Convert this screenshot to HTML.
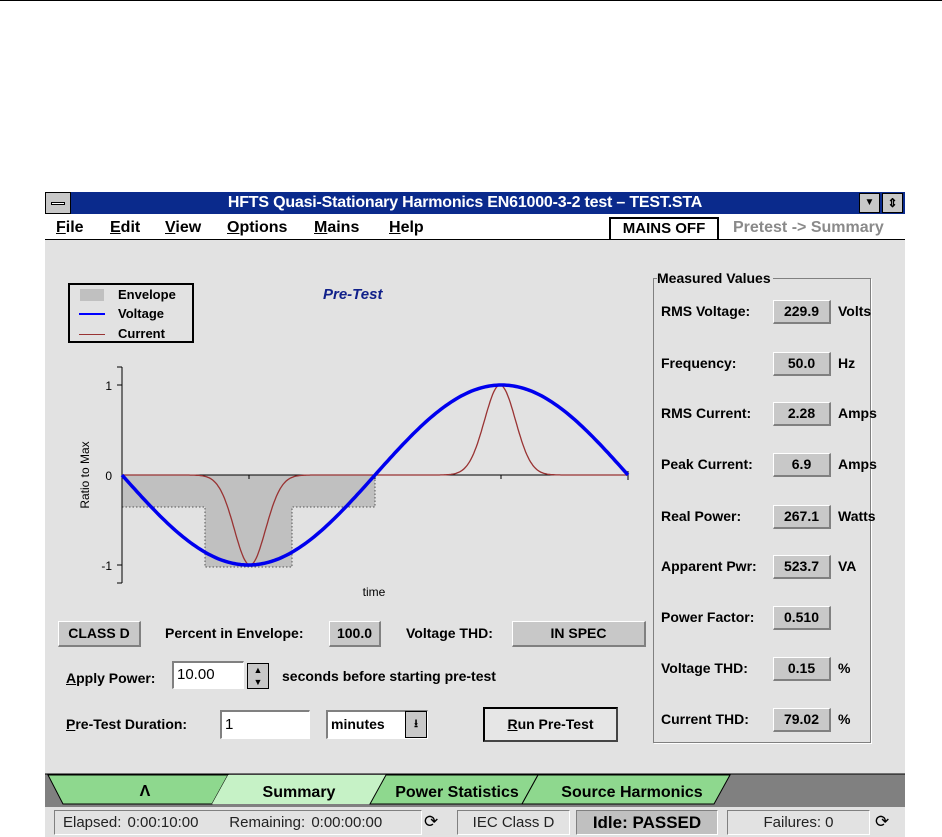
<!DOCTYPE html>
<html><head><meta charset="utf-8"><style>
*{margin:0;padding:0;box-sizing:border-box}
body{width:942px;height:837px;background:#fff;position:relative;overflow:hidden;font-family:"Liberation Sans",Arial,sans-serif;font-weight:bold;font-size:14px;color:#000}
.a{position:absolute;white-space:nowrap}
.box{position:absolute;background:#c8c8c8;border-top:1px solid #fff;border-left:1px solid #fff;border-right:2px solid #808080;border-bottom:2px solid #808080;text-align:center;font-size:14px;line-height:20px}
.in{position:absolute;background:#fff;border-top:2px solid #808080;border-left:2px solid #808080;border-right:1px solid #fff;border-bottom:1px solid #fff;font-weight:normal;font-size:15px;padding-left:3px}
u{text-decoration:underline}
.st{position:absolute;top:810px;height:25px;border-top:1px solid #808080;border-left:1px solid #808080;border-right:1px solid #fff;border-bottom:1px solid #fff;font-weight:normal;font-size:15px;line-height:23px;color:#222}
svg text{font-weight:normal}
</style></head><body>
<div class="a" style="left:0;top:0;width:942px;height:1px;background:#000"></div>
<div class="a" style="left:45px;top:192px;width:860px;height:645px;background:#e2e2e2"></div>
<div class="a" style="left:45px;top:192px;width:860px;height:22px;background:#0a2a8c;color:#fff;font-size:16px;line-height:22px;text-align:center;padding-right:20px;letter-spacing:-0.2px">HFTS Quasi-Stationary Harmonics EN61000-3-2 test – TEST.STA</div>
<div class="a" style="left:45px;top:192px;width:26px;height:22px;background:#c8c8c8;border:1px solid #000"><div style="position:absolute;left:5px;top:9px;width:14px;height:3px;background:#fff;border:1px solid #000"></div></div>
<div class="a" style="left:859px;top:193px;width:21px;height:20px;background:#c8c8c8;border:1px solid #000;font-size:10px;text-align:center;line-height:18px">▼</div>
<div class="a" style="left:882px;top:193px;width:21px;height:20px;background:#c8c8c8;border:1px solid #000;font-size:12px;text-align:center;line-height:18px">⇕</div>
<div class="a" style="left:45px;top:214px;width:860px;height:26px;background:#fff;border-bottom:1px solid #000"></div>
<div class="a" style="left:56px;top:219px;font-size:16px"><u>F</u>ile</div>
<div class="a" style="left:110px;top:219px;font-size:16px"><u>E</u>dit</div>
<div class="a" style="left:165px;top:219px;font-size:16px"><u>V</u>iew</div>
<div class="a" style="left:227px;top:219px;font-size:16px"><u>O</u>ptions</div>
<div class="a" style="left:314px;top:219px;font-size:16px"><u>M</u>ains</div>
<div class="a" style="left:389px;top:219px;font-size:16px"><u>H</u>elp</div>
<div class="a" style="left:609px;top:217px;width:110px;height:22px;border:2px solid #000;border-bottom:none;font-size:15px;text-align:center;line-height:20px">MAINS OFF</div>
<div class="a" style="left:733px;top:219px;font-size:16px;color:#8a8a8a">Pretest -&gt; Summary</div>
<div class="a" style="left:68px;top:283px;width:126px;height:60px;border:2px solid #000"></div>
<div class="a" style="left:80px;top:289px;width:24px;height:12px;background:#c0c0c0"></div>
<div class="a" style="left:79px;top:313px;width:26px;height:2px;background:#0000ff"></div>
<div class="a" style="left:79px;top:334px;width:26px;height:1px;background:#993333"></div>
<div class="a" style="left:118px;top:287px;font-size:13px">Envelope</div>
<div class="a" style="left:118px;top:306px;font-size:13px">Voltage</div>
<div class="a" style="left:118px;top:326px;font-size:13px">Current</div>
<div class="a" style="left:323px;top:286px;font-size:15px;font-style:italic;color:#10208a">Pre-Test</div>
<svg class="a" style="left:0;top:0" width="942" height="837">
<path d="M122 475 H375 V507 H292 V567 H205 V507 H122 Z" fill="#c0c0c0"/>
<path d="M122 507 H205 V567 H292 V507 H375 V475" fill="none" stroke="#555" stroke-dasharray="1.5 2"/>
<line x1="122" y1="367" x2="122" y2="583" stroke="#000"/>
<line x1="117" y1="367" x2="122" y2="367" stroke="#000"/>
<line x1="117" y1="583" x2="122" y2="583" stroke="#000"/>
<line x1="117" y1="385" x2="122" y2="385" stroke="#000"/>
<line x1="117" y1="565" x2="122" y2="565" stroke="#000"/>
<line x1="122" y1="475" x2="628" y2="475" stroke="#000"/>
<line x1="249" y1="475" x2="249" y2="479" stroke="#000"/>
<line x1="375" y1="475" x2="375" y2="479" stroke="#000"/>
<line x1="501" y1="475" x2="501" y2="479" stroke="#000"/>
<line x1="628" y1="471" x2="628" y2="480" stroke="#000"/>
<path id="cur" fill="none" stroke="#993333" stroke-width="1.3" d=""/>
<path id="volt" fill="none" stroke="#0000ee" stroke-width="3.5" d=""/>
<text x="112" y="390" font-size="12" font-family="Liberation Sans" text-anchor="end">1</text>
<text x="112" y="480" font-size="12" font-family="Liberation Sans" text-anchor="end">0</text>
<text x="112" y="570" font-size="12" font-family="Liberation Sans" text-anchor="end">-1</text>
<text x="374" y="596" font-size="12" font-family="Liberation Sans" text-anchor="middle">time</text>
<text transform="translate(89 475) rotate(-90)" font-size="12" font-family="Liberation Sans" text-anchor="middle">Ratio to Max</text>
<rect x="45" y="774" width="860" height="33" fill="#808080"/>
<line x1="45" y1="774" x2="905" y2="774" stroke="#000"/>
<path d="M48 775 L228 775 L212 804 L63 804 Z" fill="#8ed88e" stroke="#000"/>
<path d="M228 775 L386 775 L370 804 L212 804 Z" fill="#c6f2c6" stroke="none"/>
<path d="M386 775 L538 775 L522 804 L370 804 Z" fill="#8ed88e" stroke="#000"/>
<path d="M538 775 L730 775 L714 804 L522 804 Z" fill="#8ed88e" stroke="#000"/>
<text x="145" y="796" font-size="16" style="font-weight:bold" font-family="Liberation Sans" text-anchor="middle">Λ</text>
<text x="299" y="797" font-size="16" style="font-weight:bold" font-family="Liberation Sans" text-anchor="middle">Summary</text>
<text x="457" y="797" font-size="16" style="font-weight:bold" font-family="Liberation Sans" text-anchor="middle">Power Statistics</text>
<text x="632" y="797" font-size="16" style="font-weight:bold" font-family="Liberation Sans" text-anchor="middle">Source Harmonics</text>
</svg>
<div class="box" style="left:58px;top:621px;width:83px;height:26px;line-height:22px">CLASS D</div>
<div class="a" style="left:165px;top:625px">Percent in Envelope:</div>
<div class="box" style="left:329px;top:621px;width:52px;height:26px;line-height:22px">100.0</div>
<div class="a" style="left:406px;top:625px">Voltage THD:</div>
<div class="box" style="left:512px;top:621px;width:134px;height:26px;line-height:22px">IN SPEC</div>
<div class="a" style="left:66px;top:670px"><u>A</u>pply Power:</div>
<div class="in" style="left:172px;top:661px;width:72px;height:28px;line-height:24px">10.00</div>
<div class="a" style="left:247px;top:663px;width:22px;height:26px;background:#c8c8c8;border:1px solid #000;font-size:9px;text-align:center;line-height:12px">▲<br>▼</div>
<div class="a" style="left:282px;top:668px">seconds before starting pre-test</div>
<div class="a" style="left:66px;top:716px"><u>P</u>re-Test Duration:</div>
<div class="in" style="left:220px;top:710px;width:90px;height:29px;line-height:25px">1</div>
<div class="in" style="left:326px;top:710px;width:102px;height:29px;line-height:25px;font-weight:bold;font-size:14px">minutes</div>
<div class="a" style="left:405px;top:711px;width:22px;height:27px;background:#c8c8c8;border:1px solid #000;font-size:11px;text-align:center;line-height:24px">⭳</div>
<div class="a" style="left:483px;top:707px;width:135px;height:35px;background:#e6e6e6;border:2px solid #000;border-right-color:#444;border-bottom-color:#444;text-align:center;line-height:30px"><u>R</u>un Pre-Test</div>
<div class="a" style="left:653px;top:278px;width:218px;height:465px;border:1px solid #808080;box-shadow:1px 1px 0 #fff"></div>
<div class="a" style="left:657px;top:270px;background:#e2e2e2;padding-right:2px">Measured Values</div>
<div class="a" style="left:661px;top:303px">RMS Voltage:</div><div class="box" style="left:773px;top:300px;width:58px;height:24px">229.9</div><div class="a" style="left:838px;top:303px">Volts</div>
<div class="a" style="left:661px;top:355px">Frequency:</div><div class="box" style="left:773px;top:352px;width:58px;height:24px">50.0</div><div class="a" style="left:838px;top:355px">Hz</div>
<div class="a" style="left:661px;top:405px">RMS Current:</div><div class="box" style="left:773px;top:402px;width:58px;height:24px">2.28</div><div class="a" style="left:838px;top:405px">Amps</div>
<div class="a" style="left:661px;top:456px">Peak Current:</div><div class="box" style="left:773px;top:453px;width:58px;height:24px">6.9</div><div class="a" style="left:838px;top:456px">Amps</div>
<div class="a" style="left:661px;top:508px">Real Power:</div><div class="box" style="left:773px;top:505px;width:58px;height:24px">267.1</div><div class="a" style="left:838px;top:508px">Watts</div>
<div class="a" style="left:661px;top:558px">Apparent Pwr:</div><div class="box" style="left:773px;top:555px;width:58px;height:24px">523.7</div><div class="a" style="left:838px;top:558px">VA</div>
<div class="a" style="left:661px;top:609px">Power Factor:</div><div class="box" style="left:773px;top:606px;width:58px;height:24px">0.510</div>
<div class="a" style="left:661px;top:660px">Voltage THD:</div><div class="box" style="left:773px;top:657px;width:58px;height:24px">0.15</div><div class="a" style="left:838px;top:660px">%</div>
<div class="a" style="left:661px;top:711px">Current THD:</div><div class="box" style="left:773px;top:708px;width:58px;height:24px">79.02</div><div class="a" style="left:838px;top:711px">%</div>
<div class="st" style="left:54px;width:368px;padding-left:8px;word-spacing:2px">Elapsed: 0:00:10:00 &nbsp;&nbsp;&nbsp;&nbsp;Remaining: 0:00:00:00</div>
<div class="a" style="left:424px;top:812px;font-size:17px;font-weight:normal">⟳</div>
<div class="st" style="left:457px;width:113px;text-align:center">IEC Class D</div>
<div class="st" style="left:576px;width:142px;text-align:center;background:#c0c0c0;font-weight:bold;font-size:17px;color:#000">Idle: PASSED</div>
<div class="st" style="left:727px;width:143px;text-align:center">Failures: 0</div>
<div class="a" style="left:875px;top:812px;font-size:17px;font-weight:normal">⟳</div>
<script>
var v="",c="";
for(var i=0;i<=200;i++){var t=i/200;var x=122+t*506;var y=475+90*Math.sin(2*Math.PI*t);v+=(i?"L":"M")+x.toFixed(1)+" "+y.toFixed(1);}
for(var i=0;i<=400;i++){var x=122+i*506/400;var d1=(x-250)/22,d2=(x-500)/22;var y=475+90*Math.exp(-d1*d1)-90*Math.exp(-d2*d2);c+=(i?"L":"M")+x.toFixed(1)+" "+y.toFixed(1);}
document.getElementById("volt").setAttribute("d",v);document.getElementById("cur").setAttribute("d",c);
</script>
</body></html>
